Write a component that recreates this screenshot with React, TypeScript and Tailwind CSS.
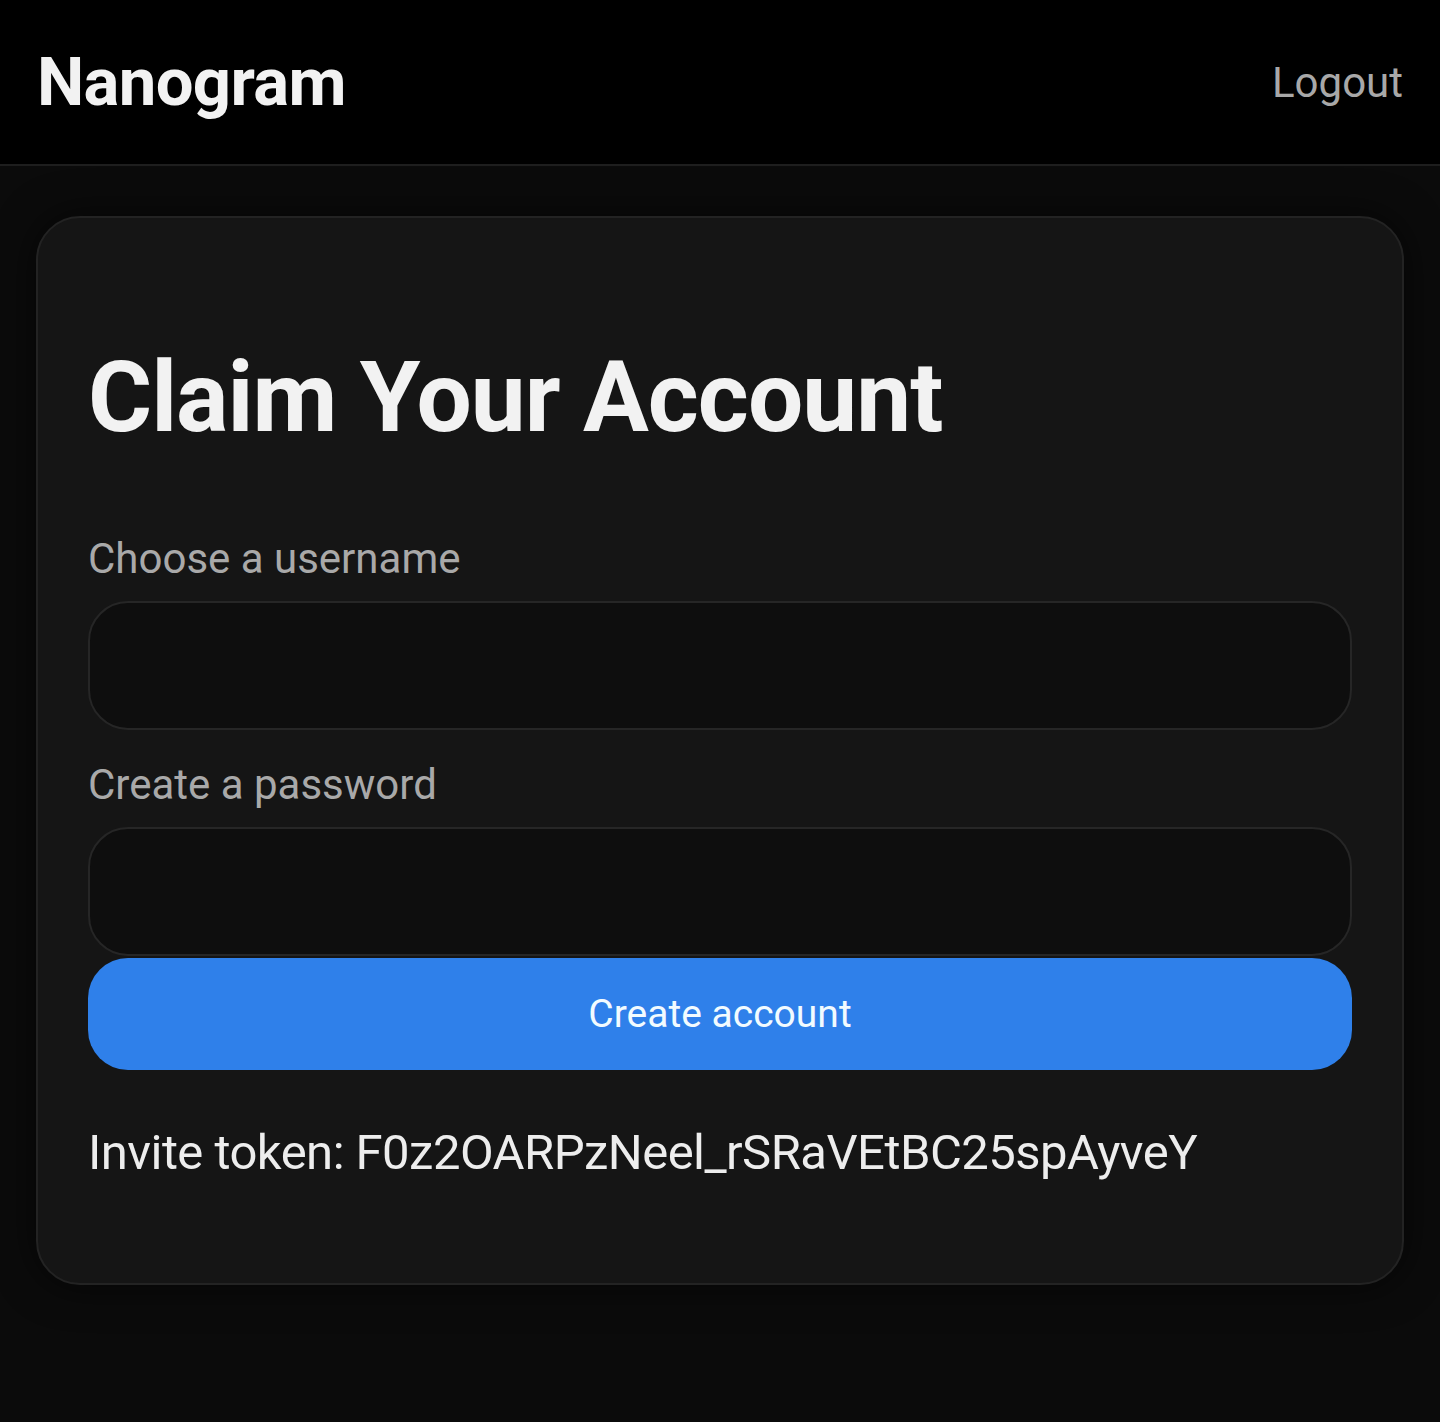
import { FC } from "react";

const font = { fontFamily: "Roboto, 'Noto Sans', sans-serif" };

const Field: FC<{ label: string; type: string; first?: boolean }> = ({ label, type, first }) => (
  <div className="flex flex-col">
    <label className={`text-[42px] leading-[60px] text-[#a9a9a9] ${first ? "mt-[71px]" : "mt-[25px]"}`}>
      {label}
    </label>
    <input
      type={type}
      className="mt-[12px] h-[129px] w-full rounded-[40px] border-2 border-[#262626] bg-[#0e0e0e] px-8 text-[42px] text-white outline-none"
    />
  </div>
);

const App: FC = () => {
  return (
    <div className="min-h-[1422px] bg-[#0b0b0b] text-white" style={font}>
      {/* header */}
      <header className="flex h-[166px] items-center justify-between border-b-2 border-[#1e1e1e] bg-black px-[37px]">
        <span className="text-[67px] font-bold leading-none text-[#f2f2f2] tracking-[-0.01em]">
          Nanogram
        </span>
        <button className="text-[42px] leading-none text-[#a8a8a8] mt-[2px]">Logout</button>
      </header>

      {/* card */}
      <main className="px-[36px] pt-[50px]">
        <div className="flex flex-col rounded-[44px] border-2 border-[#232323] bg-[#151515] px-[50px] pb-[101px] pt-[121px] shadow-[0_0_40px_rgba(0,0,0,0.6)]">
          <h1 className="text-[98px] font-bold leading-[120px] text-[#f2f2f2] tracking-[-0.01em] -mt-[1px]">
            Claim Your Account
          </h1>
          <Field label="Choose a username" type="text" first />
          <Field label="Create a password" type="password" />
          <button className="mt-[2px] h-[112px] w-full rounded-[40px] bg-[#2f80ea] text-[39px] text-[#f2fbff]">
            Create account
          </button>
          <p className="mt-[53px] text-[49px] leading-[59px] text-[#ededed] tracking-[-0.011em]">
            Invite token: F0z2OARPzNeel_rSRaVEtBC25spAyveY
          </p>
        </div>
      </main>
    </div>
  );
};

export default App;
